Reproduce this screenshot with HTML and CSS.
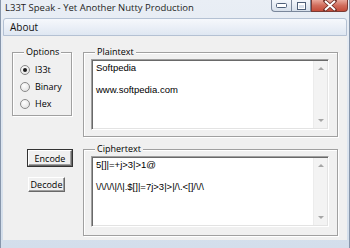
FILE: index.html
```html
<!DOCTYPE html>
<html lang="en">
<head>
    <meta charset="UTF-8">
    <title>L33T Speak - Yet Another Nutty Production</title>
    <link rel="stylesheet" href="styles.css">
</head>
<body>
    <div class="window">
        <div class="titlebar">
            <span class="title">L33T Speak - Yet Another Nutty Production</span>
            <div class="caption-buttons">
                <span class="cap cap-min">
                    <svg width="11" height="5" viewBox="0 0 11 5"><rect x="0.5" y="0.5" width="10" height="4" rx="1" fill="#fff" stroke="#4e5f78"/></svg>
                </span>
                <span class="cap cap-max">
                    <svg width="9" height="8" viewBox="0 0 9 8"><rect x="0.5" y="0.5" width="8" height="7" fill="#fff" stroke="#4e5f78"/><rect x="2" y="3" width="5" height="3" fill="#d9e1ec"/></svg>
                </span>
                <span class="cap cap-close">
                    <svg width="14" height="11" viewBox="0 0 14 11"><path d="M2 1 L12 10 M12 1 L2 10" stroke="#6b2a22" stroke-width="3.6" stroke-linecap="round"/><path d="M2 1 L12 10 M12 1 L2 10" stroke="#fff" stroke-width="2"/></svg>
                </span>
            </div>
        </div>
        <div class="menubar">
            <span class="menu-item">About</span>
        </div>
        <div class="client">
            <fieldset class="group options">
                <legend>Options</legend>
                <label class="radio"><span class="dot checked"></span>l33t</label>
                <label class="radio"><span class="dot"></span>Binary</label>
                <label class="radio"><span class="dot"></span>Hex</label>
            </fieldset>

            <fieldset class="group text-group">
                <legend>Plaintext</legend>
                <div class="textbox">
                    <div class="text">Softpedia<br><br>www.softpedia.com</div>
                    <div class="scrollbar"><span class="arrow up"></span><span class="arrow down"></span></div>
                </div>
            </fieldset>

            <div class="buttons">
                <button class="btn default">Encode</button>
                <button class="btn small">Decode</button>
            </div>

            <fieldset class="group text-group cipher">
                <legend>Ciphertext</legend>
                <div class="textbox">
                    <div class="text">5[]|=+j&gt;3|&gt;1@<br><br>\/\/\/\|/\|.$[]|=7j&gt;3|&gt;|/\.&lt;[]/\/\</div>
                    <div class="scrollbar"><span class="arrow up"></span><span class="arrow down"></span></div>
                </div>
            </fieldset>
        </div>
    </div>
</body>
</html>
```
FILE: styles.css
```css
body {
    margin: 0;
    width: 350px;
    height: 248px;
    overflow: hidden;
    font-family: "Open Sans", sans-serif;
    color: #000;
}
.window {
    height: 248px;
    background: linear-gradient(#e9eef5, #d3deeb);
    box-sizing: border-box;
    border-left: 1px solid #8796ab;
    border-right: 1px solid #8796ab;
}
.titlebar {
    height: 18px;
    display: flex;
    align-items: flex-start;
}
.title {
    font-size: 9.5px;
    line-height: 16px;
    padding-left: 4px;
    color: #1e1e1e;
}
.caption-buttons {
    margin-left: auto;
    margin-right: 1px;
    display: flex;
}
.cap {
    height: 12px;
    display: flex;
    align-items: center;
    justify-content: center;
    border: 1px solid #7a879b;
    border-top: none;
    box-sizing: border-box;
    background: linear-gradient(#f4f7fb, #d7e0eb);
}
.cap-min {
    width: 20px;
    border-radius: 0 0 0 4px;
    border-right: none;
}
.cap-max {
    width: 20px;
}
.cap-close {
    width: 37px;
    border-radius: 0 0 4px 0;
    border-color: #7b3a33;
    background: linear-gradient(#e9a89b, #d16d5c 50%, #c44b38);
}
.menubar {
    margin: 0 2px;
    height: 18px;
    box-sizing: border-box;
    border: 1px solid #b4c1d3;
    border-radius: 3px 3px 0 0;
    background: linear-gradient(#f6f8fc, #dfe7f2);
    display: flex;
    align-items: center;
}
.menu-item {
    font-size: 10px;
    padding-left: 6px;
    color: #111;
}
.client {
    margin: 0 2px;
    height: 204px;
    box-sizing: border-box;
    background: #f0f0f0;
    display: grid;
    grid-template-columns: 60px 255px;
    grid-template-rows: 91px 93px;
    column-gap: 11px;
    row-gap: 6px;
    padding: 10px 0 0 9px;
    align-items: start;
}
.group {
    margin: 0;
    padding: 0;
    min-width: 0;
    box-sizing: border-box;
    border: 1px solid #a0a0a0;
    box-shadow: 1px 1px 0 #fff, inset 1px 1px 0 #fff;
}
.group legend {
    font-size: 9px;
    line-height: 12px;
    padding: 0 2px;
    margin-left: 4px;
    background: #f0f0f0;
}
.options {
    height: 70px;
    padding: 3px 0 0 7px;
}
.radio {
    display: flex;
    align-items: center;
    gap: 5px;
    font-size: 9px;
    height: 17px;
}
.dot {
    width: 10px;
    height: 10px;
    box-sizing: border-box;
    border-radius: 50%;
    border: 1px solid #8a8a8a;
    background: radial-gradient(circle at 40% 35%, #fff, #dcdcdc);
    display: flex;
    align-items: center;
    justify-content: center;
}
.dot.checked::after {
    content: "";
    width: 4px;
    height: 4px;
    border-radius: 50%;
    background: #1c1c1c;
}
.text-group {
    height: 91px;
    padding: 1px 8px 0 7px;
}
.cipher {
    height: 93px;
}
.textbox {
    height: 71px;
    box-sizing: border-box;
    border: 1px solid;
    border-color: #a0a0a0 #fff #fff #a0a0a0;
    box-shadow: inset 1px 1px 0 #696969, inset -1px -1px 0 #e3e3e3;
    background: #fff;
    display: flex;
    padding: 1px;
}
.text {
    flex: 1;
    font-family: "Liberation Sans", Arial, sans-serif;
    font-size: 9.5px;
    line-height: 11px;
    padding: 1px 0 0 3px;
}
.scrollbar {
    width: 13px;
    background: #f3f3f3;
    border-left: 1px solid #ececec;
    display: flex;
    flex-direction: column;
    justify-content: space-between;
    align-items: center;
    padding: 6px 0;
}
.arrow {
    width: 0;
    height: 0;
    border-left: 3px solid transparent;
    border-right: 3px solid transparent;
}
.arrow.up {
    border-bottom: 3px solid #a6a6a6;
}
.arrow.down {
    border-top: 3px solid #a6a6a6;
}
.buttons {
    display: flex;
    flex-direction: column;
    align-items: flex-start;
    padding: 6px 0 0 15px;
    gap: 10px;
}
.btn {
    font-family: "Open Sans", sans-serif;
    font-size: 9px;
    padding: 0;
    background: #f0f0f0;
    color: #000;
    border: 1px solid;
    border-color: #fff #696969 #696969 #fff;
    box-shadow: inset -1px -1px 0 #a0a0a0;
    box-sizing: border-box;
}
.btn.default {
    width: 46px;
    height: 18px;
    outline: 1px solid #333;
    outline-offset: -1px;
    border-width: 2px;
}
.btn.small {
    width: 37px;
    height: 15px;
    margin-left: 1px;
}
```
